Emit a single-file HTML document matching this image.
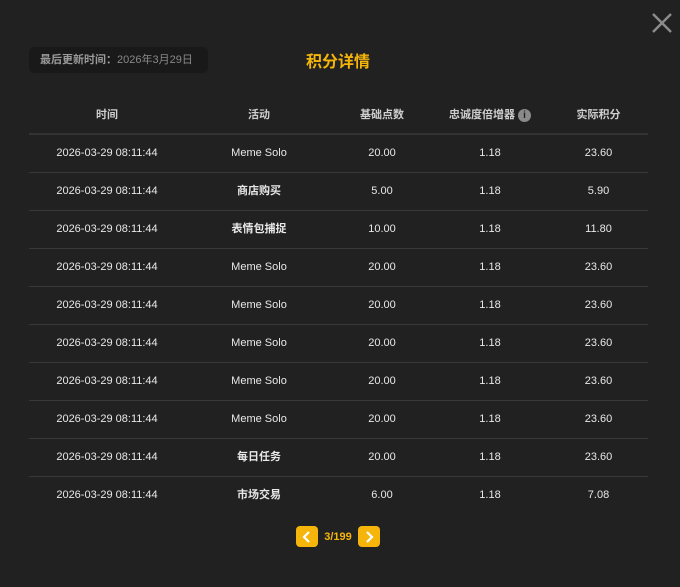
<!DOCTYPE html>
<html><head><meta charset="utf-8"><style>
*{margin:0;padding:0;box-sizing:border-box}
body{width:680px;height:587px;background:#212121;font-family:"Liberation Sans","Noto Sans CJK SC",sans-serif;color:#e6e6e6;position:relative;overflow:hidden}
.upd{position:absolute;left:29px;top:47px;width:179px;height:26px;background:#191919;border-radius:5px;font-size:11px;color:#9a9a9a;line-height:26px;padding-left:11px;font-weight:bold}
.upd span{font-weight:normal;color:#888}
.title{position:absolute;left:0;width:676px;top:48px;text-align:center;font-size:16px;font-weight:bold;color:#f5b50a}
.close{position:absolute;left:651px;top:12px}
table{position:absolute;left:29px;top:97px;width:619px;border-collapse:collapse;font-size:11px}
th{height:37px;font-weight:bold;color:#cfcfcf;border-bottom:2px solid #333;font-size:11px;white-space:nowrap;line-height:14px}
td{height:38px;text-align:center;border-bottom:1px solid #383838;color:#e8e8e8;line-height:14px;vertical-align:middle;white-space:nowrap}
td.cn{font-weight:bold}
.i{display:inline-block;width:13px;height:13px;border-radius:50%;background:#8a8a8a;color:#212121;font-size:10px;line-height:13px;text-align:center;vertical-align:middle;margin-left:3px;font-weight:bold}
.pg{position:absolute;top:526px;left:296px;display:flex;align-items:center}
.b{width:22px;height:21px;background:#f5b50a;border-radius:4px;display:flex;align-items:center;justify-content:center}
.pt{width:40px;text-align:center;font-size:11px;font-weight:bold;color:#f5b50a}
</style></head><body>
<div class="upd">最后更新时间：<span>2026年3月29日</span></div>
<div class="title">积分详情</div>
<svg class="close" width="22" height="22" viewBox="0 0 22 22"><path d="M2 2L20 20M20 2L2 20" stroke="#8c8c8c" stroke-width="2.4"/></svg>
<table>
<colgroup><col style="width:156px"><col style="width:148px"><col style="width:98px"><col style="width:118px"><col style="width:99px"></colgroup>
<tr><th>时间</th><th>活动</th><th>基础点数</th><th>忠诚度倍增器<span class="i">i</span></th><th>实际积分</th></tr>
<tr><td>2026-03-29 08:11:44</td><td>Meme Solo</td><td>20.00</td><td>1.18</td><td>23.60</td></tr>
<tr><td>2026-03-29 08:11:44</td><td class="cn">商店购买</td><td>5.00</td><td>1.18</td><td>5.90</td></tr>
<tr><td>2026-03-29 08:11:44</td><td class="cn">表情包捕捉</td><td>10.00</td><td>1.18</td><td>11.80</td></tr>
<tr><td>2026-03-29 08:11:44</td><td>Meme Solo</td><td>20.00</td><td>1.18</td><td>23.60</td></tr>
<tr><td>2026-03-29 08:11:44</td><td>Meme Solo</td><td>20.00</td><td>1.18</td><td>23.60</td></tr>
<tr><td>2026-03-29 08:11:44</td><td>Meme Solo</td><td>20.00</td><td>1.18</td><td>23.60</td></tr>
<tr><td>2026-03-29 08:11:44</td><td>Meme Solo</td><td>20.00</td><td>1.18</td><td>23.60</td></tr>
<tr><td>2026-03-29 08:11:44</td><td>Meme Solo</td><td>20.00</td><td>1.18</td><td>23.60</td></tr>
<tr><td>2026-03-29 08:11:44</td><td class="cn">每日任务</td><td>20.00</td><td>1.18</td><td>23.60</td></tr>
<tr><td style="border:none">2026-03-29 08:11:44</td><td class="cn" style="border:none">市场交易</td><td style="border:none">6.00</td><td style="border:none">1.18</td><td style="border:none">7.08</td></tr>
</table>
<div class="pg">
<div class="b"><svg width="10" height="12" viewBox="0 0 10 12"><path d="M7 1L2 6L7 11" stroke="#fff" stroke-width="2.2" fill="none"/></svg></div>
<div class="pt">3/199</div>
<div class="b"><svg width="10" height="12" viewBox="0 0 10 12"><path d="M3 1L8 6L3 11" stroke="#fff" stroke-width="2.2" fill="none"/></svg></div>
</div>
</body></html>
